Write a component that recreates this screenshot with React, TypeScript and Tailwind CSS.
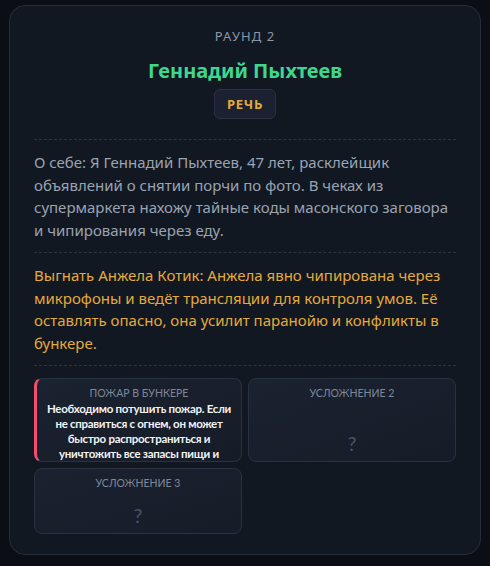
import React from "react";

type Threat = { title: string; text?: string; active?: boolean };

const threats: Threat[] = [
  {
    title: "Пожар в бункере",
    text: "Необходимо потушить пожар. Если не справиться с огнем, он может быстро распространиться и уничтожить все запасы пищи и воды.",
    active: true,
  },
  { title: "Усложнение 2" },
  { title: "Усложнение 3" },
];

function ThreatCard({ t }: { t: Threat }) {
  return (
    <div
      className={
        "flex max-h-[84px] min-h-[66px] flex-col overflow-hidden rounded-lg border border-[#2a3241] bg-gradient-to-br from-[#1b2230] to-[#161c27] px-2 pt-[7px] text-center font-['Lato',sans-serif] " +
        (t.active ? "border-l-[3px] border-l-[#f0506e]" : "")
      }
    >
      <div className="text-[10.5px] uppercase leading-[14px] text-[#7d8799]">{t.title}</div>
      {t.text ? (
        <p className="mt-[1px] text-[11.5px] font-bold leading-[15px] tracking-[-0.025em] text-[#f1f3f6]">{t.text}</p>
      ) : (
        <div className="mt-auto mb-[6px] text-[20px] leading-6 text-[#4b5466]">?</div>
      )}
    </div>
  );
}

export default function App() {
  return (
    <div className="min-h-[566px] bg-[#0b0e14] px-[9px] pt-[5px] font-['Noto_Sans',sans-serif]">
      <div className="h-[550px] rounded-2xl border border-[#262d3b] bg-[#121821] px-6 pt-[20px]">
        <div className="text-center">
          <div className="text-[13px] uppercase leading-5 tracking-[0.08em] text-[#8b95a6]">Раунд 2</div>
          <h1 className="mt-[11px] text-[20px] font-bold leading-7 text-[#3fd68e]">Геннадий Пыхтеев</h1>
          <span className="mt-[4px] inline-block rounded-md border border-[#2a3241] bg-[#1b2130] px-3 py-[5px] text-[13px] font-bold leading-[18px] tracking-[0.06em] text-[#e4aa3c]">
            РЕЧЬ
          </span>
        </div>

        <div className="mt-[20px] border-t border-dashed border-[#2c3442]" />
        <p className="py-[11px] text-[15px] leading-[22.5px] text-[#9aa3b2]">
          О себе: Я Геннадий Пыхтеев, 47 лет, расклейщик объявлений о снятии порчи по фото. В чеках из супермаркета нахожу тайные коды масонского заговора и чипирования через еду.
        </p>
        <div className="border-t border-dashed border-[#2c3442]" />
        <p className="py-[11px] text-[15px] leading-[22.5px] text-[#e4aa3c]">
          Выгнать Анжела Котик: Анжела явно чипирована через микрофоны и ведёт трансляции для контроля умов. Её оставлять опасно, она усилит паранойю и конфликты в бункере.
        </p>
        <div className="border-t border-dashed border-[#2c3442]" />

        <div className="mt-[12px] grid grid-cols-2 gap-[6px]">
          {threats.map((t) => (
            <ThreatCard key={t.title} t={t} />
          ))}
        </div>
      </div>
    </div>
  );
}
